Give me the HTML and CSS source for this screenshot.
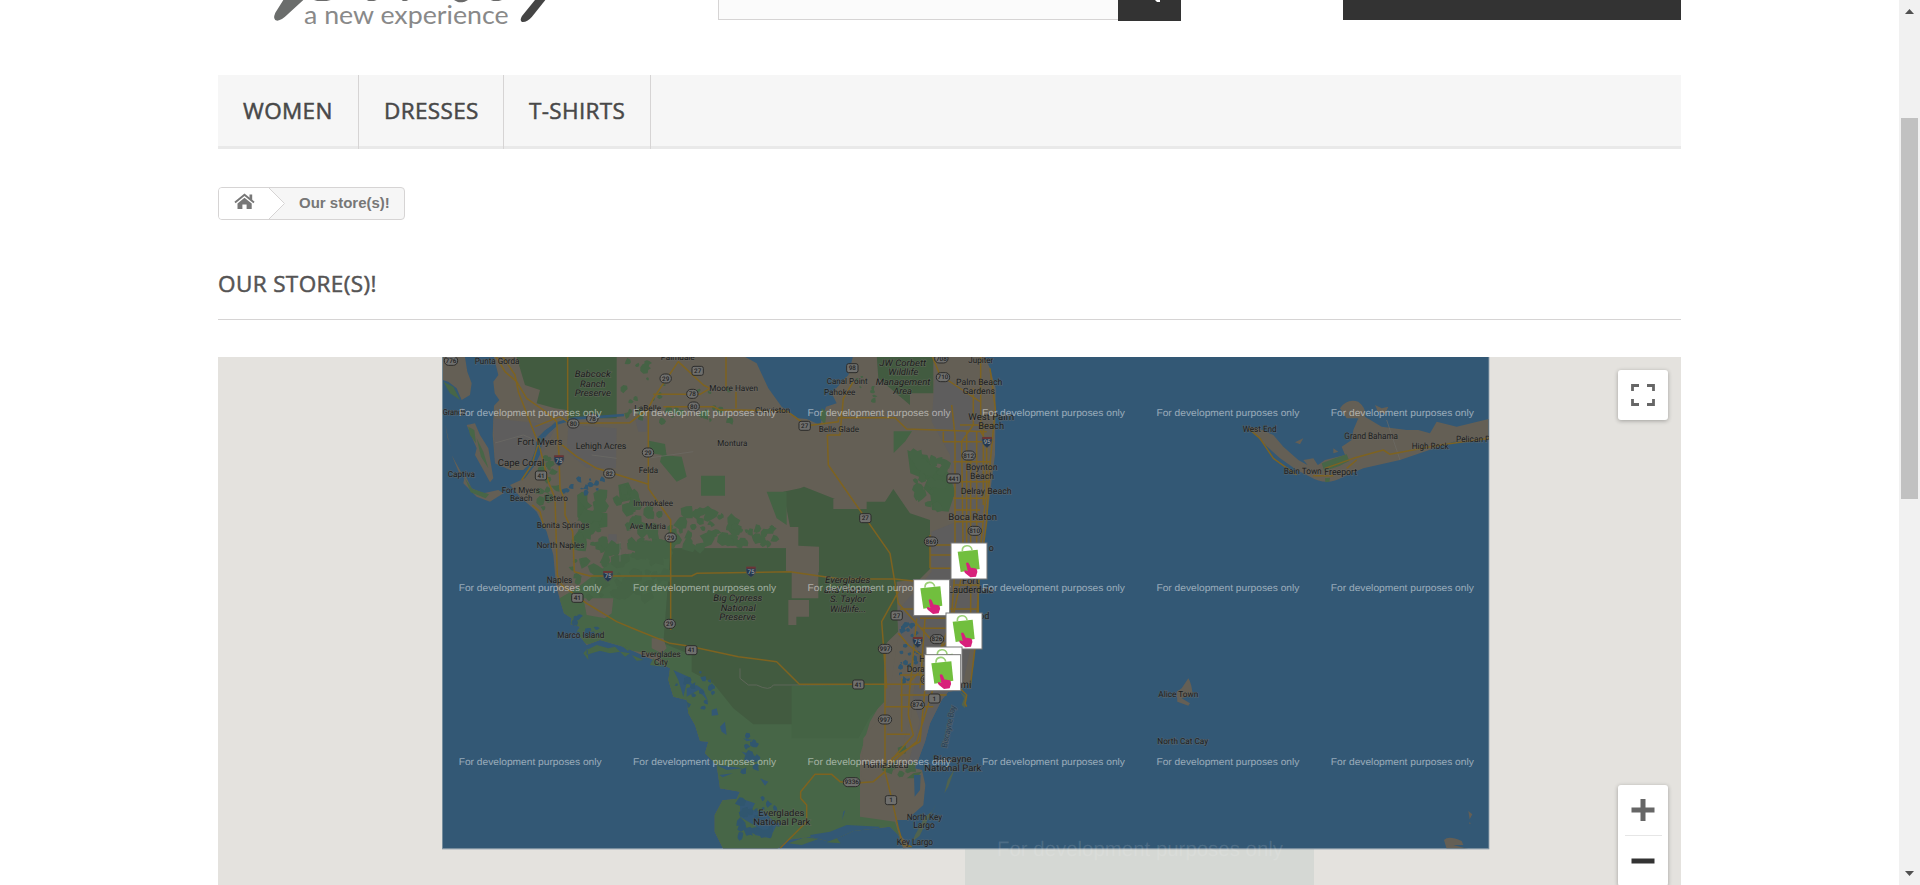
FILE: index.html
```html
<!DOCTYPE html>
<html lang="en">
<head>
<meta charset="utf-8">
<title>Our store(s)!</title>
<link rel="stylesheet" href="styles.css">
</head>
<body>
<div class="page">
  <header class="header">
    <div class="logo">
      <svg class="logo-art" width="400" height="40" viewBox="0 0 1200 120">
        <path d="M100 0L76 38Q66 60 82 62Q96 60 110 46L160 0Z" fill="#6b6d6c"/>
        <path d="M192 0h50l-12 3h-28zM350 0h30l-8 3h-16zM455 0h20l-6 3h-10zM612 0h42l-10 5q-14 3-22 0zM722 0h34l-10 3h-16z" fill="#6a6a6a"/>
        <path d="M855 0L816 48Q808 62 816 66Q830 68 846 50L886 0Z" fill="#444"/>
        <text class="logo-tag" x="162" y="71" textLength="614" lengthAdjust="spacingAndGlyphs">a new experience</text>
      </svg>
    </div>
    <div class="search">
      <div class="search-field"></div>
      <div class="search-button"><svg width="6" height="3"><path d="M0 0h5v2h-3z" fill="#fff"/></svg></div>
    </div>
    <div class="cart"></div>
  </header>

  <nav class="nav">
    <a class="nav-item nav-women">WOMEN</a>
    <a class="nav-item nav-dresses">DRESSES</a>
    <a class="nav-item nav-shirts">T-SHIRTS</a>
  </nav>

  <div class="breadcrumb">
    <svg class="crumb-home" width="67" height="31" viewBox="0 0 67 31">
      <path d="M0 0H50L66 15.500L50 31H0Z" fill="#fff"/>
      <path d="M50 0L65.500 15.500L50 31" fill="none" stroke="#d6d4d4"/>
      <path d="M16 14.600L25.500 6.800L35 14.600" fill="none" stroke="#777" stroke-width="1.900"/>
      <path d="M30.500 6.500h2.700v6l-2.700-2.200zM25.500 9.700L32.700 15.500V21H27.600v-4.600h-4.200V21H18.500v-5.500z" fill="#777"/>
    </svg>
    <span class="crumb-text">Our store(s)!</span>
  </div>

  <h1 class="title">OUR STORE(S)!</h1>

  <section class="map">
    <svg class="map-canvas" width="1463" height="528" viewBox="218 357 1463 528">
      <defs>
        <clipPath id="view"><rect x="8" y="6" width="3138" height="1474"/></clipPath>
        <clipPath id="land-clip"><use href="#land"/></clipPath>
        <g id="pin">
          <rect x="1" y="1" width="108" height="108" fill="#fff" stroke="#777" stroke-width="3"/>
          <path d="M35 25C34 5 62 4 64 22" fill="none" stroke="#9bd077" stroke-width="5"/>
          <path d="M21 27L81 21L87 79L30 88Z" fill="#71bf3e"/>
          <path d="M46 62q5-5 9 1l6 13q5-2 9 1q6-1 9 4q3 8-1 14l-2 7-17 2-15-12q-6-6-1-9l8 2z" fill="#d8217b"/>
        </g>
      </defs>
      <rect x="965" y="848" width="349" height="37" fill="#d5d8d4"/>
      <g transform="translate(440 355) scale(.333333)">
        <rect x="6" y="6" width="3142" height="1477" fill="#8094a2"/>
        <g clip-path="url(#view)">
          <rect x="8" y="6" width="3138" height="1474" fill="#335875"/>
          <g fill="#645f55">
            <path id="land" d="M160 0L175 60L160 80L164 115L178 135L162 152L158 240L165 325L210 345L250 345L270 325L285 285L290 250L315 225L345 205L352 212L310 250L300 300L285 330L255 370L210 390L240 425L290 470L320 530L340 600L348 690L360 735L372 775L395 790L392 808L420 815L410 832L440 870L480 855L550 875L640 915L690 940L685 975L700 1025L740 1035L745 1075L765 1110L780 1158L805 1160L795 1195L830 1230L840 1300L900 1310L890 1332L848 1336L824 1380L824 1430L850 1482L1012 1482L1040 1455L1110 1445L1170 1460L1240 1428L1350 1415L1375 1440L1390 1482L1415 1475L1380 1440L1368 1395L1400 1395L1450 1350L1456 1290L1446 1245L1425 1240L1455 1160L1470 1105L1505 1035L1525 1010L1560 1005L1590 985L1602 925L1606 835L1612 735L1620 640L1640 500L1652 400L1665 300L1667 100L1650 40L1632 0Z"/>
            <path d="M8 6H75L82 50L95 85L90 120L65 135L50 100L25 80L8 75ZM80 210L105 205L120 240L145 280L160 370L150 382L130 345L105 300L110 280ZM15 205l12 55l8 25l-12-35zM70 385L110 425L150 440L190 415L175 405L130 415L95 400L75 360ZM35 300l30 55l-5 5z"/>
            <path d="M2700 160Q2720 130 2755 140Q2780 160 2775 185L2825 215L2900 225L2935 225L2970 235L2990 200L3050 215L3146 192V255L3040 260L2880 315L2770 340L2710 365Q2660 395 2610 365L2570 345L2520 310L2460 255L2430 215L2460 222L2500 240L2530 275L2575 315L2620 340L2655 315L2715 300L2705 275L2735 255L2740 225L2755 190L2720 190ZM2805 150l20 10 20-5-10 22-22-8zM2565 262l25-12-10 18zM2680 280l15 10-15 5zM2590 315l30-5 20 30-20 10z"/>
            <path d="M2210 1010L2225 1000L2245 970Q2255 985 2258 1020L2225 1030L2250 1045L2245 1052L2212 1040ZM3012 1455Q3025 1440 3065 1458L3070 1470L3040 1470L3085 1482H3020ZM3085 1368l12 10-8 15zM3088 1402l5 3-5 2z"/>
            <path d="M1560 1010L1582 1025L1575 1060L1565 1050L1572 1030ZM1490 1345l-15 25-20 15-30 55-8 20 22-18 25-50zM1545 1240l-20 55-12 20 10-40 28-45z" fill="#50634f"/>
          </g>
          <path d="M905 0L950 25L985 100L1025 155L1075 190L1100 192L1140 210L1158 155L1190 145L1175 115L1225 60L1240 0Z" fill="#335875"/>
          <path d="M10 80l30 15 20 40-30-20zM85 215l18 10 5 40-18-25zM110 250l20 40 15 50-22-35zM75 370l22 32 50 16-10 12-45-18z" fill="#476647"/>
          <g clip-path="url(#land-clip)">
            <path d="M410 700L540 600L692 580H1038V648L1365 670L1360 830L1325 890L1325 1040L1290 1100L1260 1200L1260 1385L1365 1400L1390 1482H820L660 900L400 860L350 735Z" fill="#476647"/>
            <path d="M1055 985H1333V1040L1290 1085L1255 1150H1055Z" fill="#446344"/>
            <path d="M228 0H530V190H385L380 165L345 160L290 145L300 105L255 90ZM692 580H1038V648L1070 652H1137V575L1075 572V516L1050 516L1030 410L1080 400L1092 395L1185 432H1180V462H1280V440H1335L1360 402L1410 475L1470 495V642L1440 672L1370 680L1374 830L1333 870V988L1055 992V1108H940L880 1060L820 985L755 950V900L670 865ZM1310 0H1480V115H1410V150L1315 70ZM1545 110h40v80h-40z" fill="#425b40"/>
            <path d="M1045 735h62v50h-38v25h-24zM1055 648h80v82h-80z" fill="#645f55"/>
            <path d="M160 190L350 210L290 330L165 325ZM385 210L530 220L528 340L440 338L380 290ZM1485 60L1620 120L1640 500L1600 840L1570 980L1480 1130L1450 1220L1400 1240L1440 1100L1390 950L1370 770L1475 650V530L1550 500L1530 300L1475 200ZM585 190h35v40h-25zM505 538h25v22h-25z" fill="#5e5d5d"/>
            <path d="M430 730h75l15 0-5 45-20 15-55-10zM635 850h35l10 30-15 15-30-15zM515 875l40 10 15 20-40-12zM1375 840L1433 900L1413 1090L1363 1250L1290 1280L1265 1270L1270 1150L1325 1080L1345 1040Z" fill="#645f55"/>
            <path d="M1361 229h55l-20 30-35 35zM1402 285l20 10 40 5 12 30 50 20 22 60-20 60-50-5-5-45-20-20 10-25-50-20zM1610 870l8 40-5 20zM627 257l48 10 5 35-50-8zM665 300l60 5 15 60-30 15-50-60zM783 362h72v60h-72zM412 420l30-5 0 50 60 10 0 40-60 10-30-40zM535 390l30-8 25 50-50 10zM980 410h60v100l-30-20zM1420 1255l25 -5-15 20-30 0z" fill="#446344"/>
            <g id="vegetation" fill="#456345"></g>
            <path d="M300 260L345 207L405 190L490 185L552 180" fill="none" stroke="#335875" stroke-width="8"/>
            <path d="M1422 1260h20l-2 45-16 20z" fill="#335875"/>
            <path d="M900 1330l45 15-10 20 40 5 35 40-20 40-45-10 5-25-50-30zM910 1150l30 5-20 4zM905 1190l40 10-20 10zM960 1270l25 10-10 12zM1110 1440l60-10 50-20 100 5-30 25-70 20-100 5zM1210 1370l6-4-10 30zM700 945l45 20 15 30-20-10-10 40-15-50zM740 1000l30-10 20 15 15 35-30-35-35 20zM815 1065l15-5 5 20-20 2zM840 1115l15-15 5 40-15-10zM830 1230l80 10-50 5zM838 1260l40-5-30 12z" fill="#335875"/>
            <g id="ponds" fill="#30566f"></g>
          </g>
          <path d="M440 885l30-15 35 10 20-5 15 15-30 5-30-8-40 12zM540 890l30 5-15 10zM575 900l35 15-20 2zM630 930l10-20 30 25zM430 895l15 20-2-35zM1045 1465l50-18 40 5-50 18zM1160 1462l30-12 12 15zM545 872l25 8-6 8zM2645 325l40-15 35-12 8 20-30 15-45 15zM2655 370l15-2-2 12-12 2zM1145 160l15 10-5 40-15-20z" fill="#476647"/>
          <path d="M900 940V970L925 990H950M950 990Q990 1010 1000 990H1100L1335 988M165 264L250 240 285 255M455 300L530 310M620 310L760 290M540 560V620M2840 195L2880 315" fill="none" stroke="#6d6c66" stroke-width="3" opacity=".65"/>
          <g class="roads">
            <path d="M165 0L195 50L230 80L260 130L310 165L350 200L357 300L360 400L375 440V480L398 530L403 650L450 663H755L770 655L1050 650L1200 672L1365 672L1440 680"/>
            <path d="M185 0L225 60L235 110L285 240L300 280L325 380L345 430L352 660L365 690L440 745L530 800L590 825L690 865L745 873L895 905L1010 920L1078 988H1500"/>
            <path d="M285 215L360 185L390 205L570 203L625 160L640 130L715 20L790 90L810 100M640 118H780L810 100M670 155H820L840 165H900L1040 168L1100 212L1195 200V188H1365L1400 222L1640 230M360 265L410 305L470 340L625 388M625 165V400L692 495V825M383 6V195M858 6V100M888 110V160M1240 80L1210 130L1200 240H1162L1165 330L1350 595L1375 745L1470 850M1340 1000L1325 800L1375 710M1335 890V1250L1300 1280L1240 1285L1200 1280L1175 1258H1125L1082 1310V1330L1100 1350V1400L1020 1480M1335 1250L1355 1330L1375 1420L1390 1470L1415 1475M1375 835L1405 870L1470 920M277 450L300 470L313 520M245 375L275 330L300 250"/>
            <path d="M1535 150L1545 240V640L1530 850L1410 980L1405 1080L1420 1140L1350 1220M1600 100V210L1565 260L1570 640L1540 780L1455 1000L1440 1160L1355 1210M1622 0V230L1640 260V400L1615 640V770L1590 850M1650 40L1666 160L1650 330L1640 500L1618 660L1605 880L1590 1000M1475 0L1500 60L1620 140M1470 540V640M1470 570H1620M1470 600H1620M1470 640H1620M1540 690H1620M1380 762H1610M1440 790H1610M1440 820H1600M1380 1020H1520M1335 1055H1480M1380 960H1520M1340 1138H1410M1430 790L1410 1000M1455 790L1440 1000M1480 1000L1430 1160L1335 1240M1385 970V1130M1510 230V260H1660M1560 210H1660M1540 320H1650M1540 380H1650M1540 430H1640M1545 465H1620M1545 500H1630M1580 230V640M1592 290V780M1610 230V660M1630 220V450M1560 1000L1580 1020L1575 1045L1580 1055"/>
            <path d="M2425 220L2460 250L2500 310L2570 360M2620 362H2680M2655 340L2740 310L2830 285L2850 298L3000 270L3146 250M2720 340L2750 315"/>
          </g>
          <g id="shields"></g>
          <g id="labels"></g>
          <text class="label" transform="translate(1520 1180) rotate(-78)" textLength="130" font-size="24" fill="#263f55">Biscayne Bay</text>
          <g id="notices"></g>
        </g>
        <use href="#pin" x="1532" y="563"/>
        <use href="#pin" x="1420" y="673"/>
        <use href="#pin" x="1517" y="773"/>
        <use href="#pin" x="1457" y="875"/>
        <use href="#pin" x="1453" y="898"/>
      </g>
      <text class="big-notice" x="997" y="856" textLength="286" lengthAdjust="spacingAndGlyphs">For development purposes only</text>
    </svg>
    <div class="map-controls">
      <div class="control control-full">
        <svg width="24" height="22" viewBox="0 0 24 22"><path d="M1.500 7V1.500H8M16 1.500H22.500V7M22.500 15V20.500H16M8 20.500H1.500V15" fill="none" stroke="#666" stroke-width="2.800"/></svg>
      </div>
      <div class="control control-zoom">
        <div class="zoom-in"><svg width="24" height="22"><path d="M.5 8.500H9.500V0H14.500V8.500H23.500V13.500H14.500V22H9.500V13.500H.5Z" fill="#666"/></svg></div>
        <div class="zoom-out"><svg width="24" height="22"><path d="M.5 8.500H23.500V13.500H.5Z" fill="#333"/></svg></div>
      </div>
    </div>
  </section>
</div>
<aside class="scrollbar">
  <svg width="21" height="21"><path d="M6 14L10.500 9L15 14Z" fill="#505050"/></svg>
  <div class="scroll-thumb"></div>
  <svg class="scroll-down" width="21" height="21"><path d="M6 7H15L10.500 12Z" fill="#505050"/></svg>
</aside>
<script src="map.js"></script>
</body>
</html>
```
FILE: styles.css
```css
* { box-sizing: border-box; }
body {
  margin: 0;
  height: 885px;
  overflow: hidden;
  display: flex;
  background: #fff;
  font-family: "Open Sans", sans-serif;
}
.page { flex: 1; display: flex; flex-direction: column; align-items: center; height: 885px; overflow: hidden; }
.header, .nav, .breadcrumb, .title, .map { width: 1463px; flex: none; }
.header { height: 75px; display: grid; grid-template-columns: 500px 463px 162px 338px; align-items: start; }
.logo { padding-left: 32px; }
.logo-art { display: block; }
.logo-tag { font: 76px Lato, sans-serif; fill: #898989; }
.search { display: flex; align-items: flex-start; }
.search-field { width: 400px; height: 20px; background: #fbfbfb; border: 1px solid #d6d4d4; border-width: 0 0 1px 1px; }
.search-button { width: 63px; height: 21px; background: #333; padding-left: 37px; display: flex; align-items: flex-start; }
.cart { grid-column: 4; height: 20px; background: #333; }

.nav { height: 74px; display: flex; background: #f6f6f6; box-shadow: inset 0 -3px #e9e9e9; }
.nav-item {
  padding: 20px 0 0 25px;
  height: 74px;
  border-right: 1px solid #d6d4d4;
  font-size: 22.5px;
  line-height: 31px;
  letter-spacing: .35px;
  -webkit-text-stroke: .5px #484848;
  color: #484848;
}
.nav-women { width: 141px; }
.nav-dresses { width: 145px; }
.nav-shirts { width: 147px; }

.breadcrumb {
  margin-top: 38px;
  width: 187px;
  height: 33px;
  align-self: flex-start;
  margin-left: 218px;
  display: flex;
  border: 1px solid #d6d4d4;
  border-radius: 4px;
  background: #f6f6f6;
  overflow: hidden;
}
.crumb-text { padding-left: 13px; font: bold 15px/29px "Liberation Sans", sans-serif; color: #777; white-space: nowrap; }
.title {
  margin: 48px 0 37px;
  height: 52px;
  border-bottom: 1px solid #d6d4d4;
  font-size: 22.500px;
  font-weight: 400;
  line-height: 31px;
  letter-spacing: .38px;
  -webkit-text-stroke: .5px #555454;
  color: #555454;
}

.map { height: 528px; display: grid; background: #e4e2de; overflow: hidden; }
.map-canvas, .map-controls { grid-area: 1 / 1; }
.map-canvas { display: block; text-rendering: geometricPrecision; }
.map-controls { justify-self: end; padding: 13px 13px 0 0; display: flex; flex-direction: column; gap: 365px; }
.control { width: 50px; background: #fff; border-radius: 3px; box-shadow: 0 1px 4px rgba(0, 0, 0, .3); }
.control-full { height: 50px; padding: 14px 13px; }
.control-full svg, .control-zoom svg { display: block; }
.control-zoom { height: 101px; display: flex; flex-direction: column; align-items: center; }
.zoom-in { width: 37px; height: 51px; padding: 14px 0 0 6px; border-bottom: 1px solid #e6e6e6; }
.zoom-out { width: 37px; padding: 14px 0 0 6px; }

.roads { fill: none; stroke: #7e6320; stroke-width: 4.500; stroke-linejoin: round; }
.label { font-family: Roboto, sans-serif; stroke: #6d6b65; stroke-opacity: .5; stroke-width: 4; paint-order: stroke; }
.park { font-style: italic; }
.shield-text { font: 500 19px Roboto, sans-serif; text-anchor: middle; fill: #222; }
.interstate-text { fill: #9a9a9a; }
.notice { font: 29px "Liberation Sans", sans-serif; fill: #fff; fill-opacity: .5; }
.big-notice { font: 21px "Liberation Sans", sans-serif; fill: #fff; fill-opacity: .13; }

.scrollbar { width: 21px; height: 885px; background: #f1f1f1; display: flex; flex-direction: column; align-items: center; }
.scroll-thumb { width: 17px; height: 381px; margin-top: 97px; background: #c1c1c1; }
.scroll-down { margin-top: auto; }
```
FILE: map.js
```js
const NS = 'http://www.w3.org/2000/svg';

function add(parentId, tag, attrs, text) {
  const el = document.createElementNS(NS, tag);
  for (const key in attrs) el.setAttribute(key, attrs[key]);
  if (text) el.textContent = text;
  document.getElementById(parentId).appendChild(el);
}

// Place names: text, left edge, baseline, width, font size, park flag
const places = [
  ['Punta Gorda', 104, 27, 134, 25], ['Palmdale', 662, 16, 102, 24], ['Grande', 8, 179, 70, 24],
  ['Babcock', 404, 66, 108, 26, 1], ['Ranch', 420, 95, 77, 26, 1], ['Preserve', 404, 123, 109, 26, 1],
  ['LaBelle', 583, 167, 80, 24], ['Moore Haven', 808, 109, 146, 24], ['Fort Myers', 232, 270, 135, 28],
  ['Lehigh Acres', 407, 281, 152, 26], ['Cape Coral', 173, 334, 140, 28], ['Captiva', 23, 367, 82, 24],
  ['Felda', 596, 353, 58, 24], ['Montura', 832, 272, 90, 24], ['Fort Myers', 185, 413, 115, 24],
  ['Beach', 210, 438, 67, 24], ['Estero', 314, 437, 70, 24], ['Immokalee', 580, 453, 119, 24],
  ['Bonita Springs', 290, 518, 158, 24], ['Ave Maria', 569, 521, 109, 24], ['North Naples', 290, 579, 143, 24],
  ['Naples', 320, 683, 77, 26], ['Marco Island', 352, 850, 141, 25], ['Everglades', 604, 905, 118, 24],
  ['City', 642, 930, 42, 24], ['Big Cypress', 820, 739, 147, 26, 1], ['National', 842, 768, 105, 26, 1],
  ['Preserve', 838, 796, 109, 26, 1], ['JW Corbett', 1318, 32, 140, 26, 1], ['Wildlife', 1345, 60, 90, 26, 1],
  ['Management', 1307, 89, 164, 26, 1], ['Area', 1360, 117, 56, 26, 1], ['Jupiter', 1585, 24, 75, 24],
  ['Canal Point', 1160, 86, 123, 24], ['Pahokee', 1152, 119, 94, 24], ['Palm Beach', 1548, 89, 139, 25],
  ['Gardens', 1568, 116, 97, 25], ['Clewiston', 945, 174, 106, 24], ['Belle Glade', 1136, 232, 121, 24],
  ['West Palm', 1585, 194, 137, 28], ['Beach', 1615, 221, 77, 28], ['Boynton', 1577, 346, 96, 25],
  ['Beach', 1590, 373, 72, 25], ['Delray Beach', 1562, 417, 153, 25], ['Boca Raton', 1525, 496, 146, 27],
  ['o', 1646, 589, 15, 27], ['Everglades', 1155, 685, 136, 26, 1], ['and Francis', 1152, 713, 145, 26, 1],
  ['S. Taylor', 1170, 741, 107, 26, 1], ['Wildlife...', 1170, 770, 108, 26, 1], ['Fort', 1566, 686, 50, 28],
  ['Lauderdale', 1524, 714, 137, 28], ['od', 1617, 791, 31, 27], ['Hialeah', 1438, 920, 88, 28],
  ['Doral', 1400, 951, 60, 26], ['Miami', 1514, 1000, 80, 30], ['Homestead', 1270, 1239, 135, 26],
  ['Biscayne', 1480, 1221, 115, 26], ['National Park', 1453, 1249, 171, 26], ['North Key', 1400, 1394, 106, 25],
  ['Largo', 1420, 1418, 64, 25], ['Key Largo', 1370, 1471, 109, 26], ['Everglades', 955, 1382, 138, 26],
  ['National Park', 940, 1410, 171, 26], ['West End', 2408, 230, 102, 25], ['Grand Bahama', 2713, 253, 161, 26],
  ['High Rock', 2915, 283, 111, 25], ['Pelican Point', 3048, 261, 145, 25], ['Bain Town', 2531, 356, 114, 25],
  ['Freeport', 2653, 359, 98, 27], ['Alice Town', 2155, 1026, 120, 24], ['North Cat Cay', 2152, 1168, 152, 24]
];
for (const [name, x, y, width, size, park] of places) {
  add('labels', 'text', {
    class: park ? 'label park' : 'label', x, y, textLength: width,
    lengthAdjust: 'spacingAndGlyphs', 'font-size': size + 1, fill: '#1c1d1d'
  }, name);
}

// Road shields: number, centre x, centre y, kind (s = state, u = US, i = interstate)
const shields = [
  [776, 33, 17, 's'], [80, 400, 205, 's'], [78, 457, 190, 's'], [29, 677, 70, 's'], [27, 773, 47, 'u'],
  [78, 757, 116, 's'], [80, 761, 154, 's'], [29, 624, 292, 's'], [75, 357, 316, 'i'], [41, 303, 361, 'u'],
  [82, 508, 355, 's'], [29, 692, 547, 's'], [75, 504, 663, 'i'], [41, 412, 728, 'u'], [98, 1237, 39, 'u'],
  [710, 1509, 66, 's'], [708, 1504, 10, 's'], [27, 1094, 212, 'u'], [95, 1641, 261, 'i'], [812, 1586, 301, 's'],
  [441, 1541, 370, 'u'], [27, 1276, 489, 'u'], [810, 1604, 527, 's'], [869, 1473, 559, 's'], [75, 933, 650, 'i'],
  [29, 689, 806, 's'], [41, 754, 885, 'u'], [27, 1370, 781, 'u'], [997, 1335, 881, 's'], [826, 1491, 852, 's'],
  [75, 1433, 861, 'i'], [41, 1255, 988, 'u'], [1, 1483, 1030, 'u'], [874, 1433, 1049, 's'], [997, 1335, 1093, 's'],
  [9336, 1235, 1281, 's'], [1, 1353, 1335, 'u'], [836, 1463, 973, 's']
];
for (const [number, x, y, kind] of shields) {
  const digits = String(number).length;
  const w = digits > 3 ? 50 : digits > 2 ? 40 : 34;
  if (kind === 'i') {
    add('shields', 'path', { d: `M${x - 14} ${y - 14}h28q5 20-14 31q-19-11-14-31z`, fill: '#24384f', stroke: '#555', 'stroke-width': 2 });
    add('shields', 'path', { d: `M${x - 14} ${y - 15}h28v6h-28z`, fill: '#6b3434' });
  } else {
    add('shields', 'rect', { x: x - w / 2, y: y - 13, width: w, height: 27, rx: kind === 's' ? 13 : 6, fill: '#6f6f6d', stroke: '#2c2c2b', 'stroke-width': 3 });
  }
  add('shields', 'text', { class: kind === 'i' ? 'shield-text interstate-text' : 'shield-text', x, y: y + 7 }, String(number));
}

// Tile notices, one for each map tile
for (let row = 0; row < 3; row++) {
  for (let col = 0; col < 6; col++) {
    add('notices', 'text', {
      class: 'notice', x: 56 + col * 523.3, y: 184 + row * 523, textLength: 429, lengthAdjust: 'spacingAndGlyphs'
    }, 'For development purposes only');
  }
}

// Small patches of woodland and water, spread over a region
let seed = 7;
const random = () => (seed = (seed * 16807) % 2147483647) / 2147483647;
function scatter(layer, x, y, w, h, count, size) {
  let d = '';
  for (let i = 0; i < count; i++) {
    const s = size * (0.5 + random());
    const cx = x + random() * w, cy = y + random() * h;
    for (let k = 0; k < 7; k++) {
      const r = s * (0.35 + random() * 0.5), a = k / 7 * Math.PI * 2;
      d += (k ? 'L' : 'M') + (cx + r * Math.cos(a)).toFixed(0) + ' ' + (cy + r * Math.sin(a)).toFixed(0);
    }
    d += 'Z';
  }
  add(layer, 'path', { d });
}
scatter('vegetation', 540, 20, 90, 180, 16, 14);
scatter('vegetation', 640, 80, 250, 130, 20, 12);
scatter('vegetation', 410, 420, 90, 160, 16, 28);
scatter('vegetation', 520, 400, 70, 60, 8, 24);
scatter('vegetation', 560, 470, 340, 110, 60, 22);
scatter('vegetation', 430, 560, 250, 170, 55, 24);
scatter('vegetation', 880, 500, 130, 75, 22, 18);
scatter('vegetation', 1420, 300, 100, 160, 26, 22);
scatter('vegetation', 290, 300, 60, 160, 14, 15);
scatter('vegetation', 380, 500, 60, 180, 10, 13);
scatter('vegetation', 1230, 60, 120, 100, 7, 10);
scatter('vegetation', 1340, 1180, 110, 80, 10, 20);
scatter('ponds', 370, 370, 120, 45, 12, 10);
scatter('ponds', 1380, 800, 60, 190, 26, 10);
scatter('ponds', 900, 1330, 120, 120, 26, 16);
scatter('ponds', 900, 1140, 60, 110, 12, 15);
scatter('ponds', 700, 950, 120, 110, 16, 12);
scatter('ponds', 400, 780, 80, 70, 12, 12);
```
